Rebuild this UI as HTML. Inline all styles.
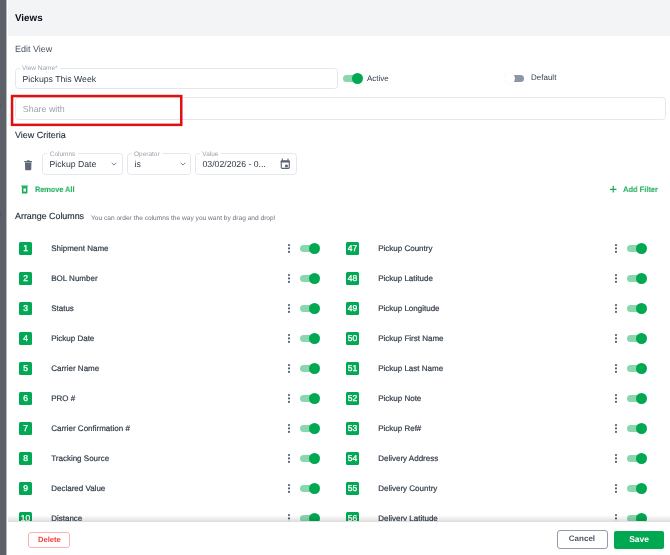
<!DOCTYPE html>
<html><head><meta charset="utf-8">
<style>
*{box-sizing:border-box;margin:0;padding:0}
body>*{will-change:transform}
html,body{text-rendering:geometricPrecision;width:670px;height:555px;overflow:hidden;background:#fff;font-family:"Liberation Sans",sans-serif;position:relative}
.a{position:absolute;white-space:nowrap}
.strip{left:0;top:0;width:7px;height:555px;background:linear-gradient(to right,#5c6068 6px,rgba(92,96,104,.45) 6px)}
.hdr{left:8px;top:0;width:662px;height:36px;background:#f3f4f6}
.t{position:absolute;white-space:nowrap;line-height:1}
.fld{position:absolute;border:1px solid #e4e7eb;border-radius:3.5px;background:#fff}
.lg{position:absolute;top:-3.3px;font-size:6.5px;color:#9ca3af;background:#fff;padding:0 2.4px;line-height:7px}
.tg{position:absolute;width:18px;height:11px}
.tg .tr{position:absolute;left:0;top:2px;width:17px;height:7.3px;border-radius:4px;background:#8ad7ad}
.tg .th{position:absolute;left:7.5px;top:0;width:11px;height:11px;border-radius:50%;background:#00a852}
.badge{position:absolute;width:13px;height:12.5px;background:#02a853;border-radius:1.5px;color:#fff;font-size:8.5px;font-weight:400;-webkit-text-stroke:.3px #fff;text-align:center;line-height:13px}
.lbl{position:absolute;font-size:8px;color:#2f3a48;white-space:nowrap;line-height:1;-webkit-text-stroke:.2px #2f3a48}
.dots{position:absolute;width:2px;height:9px}
.dots i{position:absolute;left:0;width:1.9px;height:1.9px;background:#525b69;border-radius:50%}
</style></head><body>
<div class="a strip" style="overflow:hidden"><div class="t" style="left:-4px;top:100px;font-size:9px;color:#3e434b;opacity:.5">p</div><div class="t" style="left:-4px;top:209px;font-size:9px;color:#3e434b;opacity:.5">g</div></div>
<div class="a hdr"></div>
<div class="t" style="left:15.4px;top:14px;font-size:9.8px;font-weight:700;color:#0b0f19">Views</div>
<div class="t" style="left:15.4px;top:44.8px;font-size:9px;color:#4b5563">Edit View</div>

<!-- View name -->
<div class="fld" style="left:15px;top:67.6px;width:322.5px;height:21px">
  <div class="lg" style="left:3.6px;top:-3.9px;font-size:6.5px">View Name*</div>
  <div class="t" style="left:6.5px;top:5.6px;font-size:8.7px;color:#2f3846">Pickups This Week</div>
</div>

<!-- Active toggle -->
<div class="tg" style="left:342.8px;top:72.8px"><div class="tr"></div><div class="th" style="left:8.6px"></div></div>
<div class="t" style="left:367px;top:74.5px;font-size:8px;color:#374151">Active</div>

<!-- Default toggle -->
<div class="tg" style="left:504px;top:72.5px"><div class="tr" style="left:5px;width:15px;background:#8c97a5"></div><div class="th" style="left:0;background:#fff;box-shadow:0 0 1px rgba(0,0,0,.12)"></div></div>
<div class="t" style="left:530.6px;top:74.2px;font-size:8px;color:#374151">Default</div>

<!-- Share with -->
<div class="fld" style="left:15px;top:97.2px;width:650.6px;height:22.6px">
  <div class="t" style="left:6.8px;top:6.5px;font-size:8.9px;color:#9ca3af">Share with</div>
</div>
<svg class="a" style="left:0;top:0" width="200" height="140" viewBox="0 0 200 140"><rect x="12.05" y="96.05" width="169.2" height="28.8" fill="none" stroke="#e20f10" stroke-width="2.5"/></svg>

<div class="t" style="left:15.4px;top:130.6px;font-size:9px;color:#1f2937;-webkit-text-stroke:.1px #1f2937">View Criteria</div>

<!-- Criteria -->
<svg class="a" style="left:24px;top:159.5px" width="8.5" height="10.5" viewBox="0 0 8.5 10.5"><rect x="2.9" y="0.2" width="2.8" height="1.4" rx=".5" fill="#5e6878"/><rect x="0.2" y="1.1" width="7.9" height="1.2" rx=".5" fill="#5e6878"/><path d="M1 2.4h6.4l-.15 7.2c0 .4-.35.7-.75.7H1.9c-.4 0-.75-.3-.75-.7z" fill="#5e6878"/></svg>

<div class="fld" style="left:41.6px;top:153px;width:80.6px;height:21.6px">
  <div class="lg" style="left:4.3px">Columns</div>
  <div class="t" style="left:6.5px;top:6px;font-size:8.7px;color:#2f3846">Pickup Date</div>
  <svg class="a" style="left:68px;top:8px" width="6" height="4" viewBox="0 0 6 4"><path d="M.7.8L3 3.1 5.3.8" fill="none" stroke="#6b7280" stroke-width=".9"/></svg>
</div>
<div class="fld" style="left:127.3px;top:153px;width:63.5px;height:21.6px">
  <div class="lg" style="left:3.6px">Operator</div>
  <div class="t" style="left:6.5px;top:6px;font-size:8.7px;color:#2f3846">is</div>
  <svg class="a" style="left:51.5px;top:8px" width="6" height="4" viewBox="0 0 6 4"><path d="M.7.8L3 3.1 5.3.8" fill="none" stroke="#6b7280" stroke-width=".9"/></svg>
</div>
<div class="fld" style="left:195.2px;top:153px;width:101.5px;height:21.6px">
  <div class="lg" style="left:3.9px">Value</div>
  <div class="t" style="left:6.5px;top:6px;font-size:8.7px;color:#2f3846">03/02/2026 - 0...</div>
  <svg class="a" style="left:84px;top:4px" width="11" height="12" viewBox="0 0 11 12"><path d="M2.3 0.5v2.4M8 0.5v2.4" stroke="#56606e" stroke-width="1"/><rect x="1.25" y="3.1" width="8" height="7.3" rx=".9" fill="none" stroke="#56606e" stroke-width="1.1"/><rect x="0.7" y="2.6" width="9.1" height="1.9" rx=".5" fill="#56606e"/><rect x="5.1" y="6.7" width="2.7" height="2.5" rx=".3" fill="#56606e"/></svg>
</div>

<svg class="a" style="left:21px;top:184.6px" width="7.5" height="9" viewBox="0 0 7.5 9"><rect x="0" y="0.4" width="7.2" height="1.1" rx=".5" fill="#17ab56"/><rect x="0.9" y="1.3" width="5.5" height="7.2" rx=".7" fill="#17ab56"/><path d="M2.5 3.2h2.3v3.6H2.5z" fill="#fff"/><path d="M3.15 3.2h1l-.5.9zM3.15 6.8h1l-.5-.9z" fill="#17ab56"/></svg>
<div class="t" style="left:34.7px;top:185.7px;font-size:7.9px;font-weight:700;color:#17ab56;transform:scaleX(.925);transform-origin:0 0">Remove All</div>

<svg class="a" style="left:609.7px;top:186px" width="6.5" height="6.5" viewBox="0 0 6.5 6.5"><path d="M3.25 0v6.5M0 3.25h6.5" stroke="#1aab55" stroke-width="1.25"/></svg>
<div class="t" style="left:623.2px;top:185.6px;font-size:7.9px;font-weight:700;color:#17ab56;transform:scaleX(.95);transform-origin:0 0">Add Filter</div>

<div class="t" style="left:15.2px;top:212px;font-size:8.9px;color:#1f2937;-webkit-text-stroke:.15px #1f2937">Arrange Columns</div>
<div class="t" style="left:91px;top:215.6px;font-size:6.6px;color:#6b7280">You can order the columns the way you want by drag and drop!</div>
<div class="a" style="left:8px;top:0;width:662px;height:521px;overflow:hidden">
<div class="badge" style="left:11.00px;top:242.20px">1</div><div class="lbl" style="left:43.20px;top:244.80px">Shipment Name</div><svg class="a" style="left:278.50px;top:241.40px" width="4" height="14" viewBox="0 0 4 14"><circle cx="2" cy="4.1" r="1.05" fill="#526070"/><circle cx="2" cy="7.4" r="1.05" fill="#526070"/><circle cx="2" cy="10.9" r="1.05" fill="#526070"/></svg><div class="tg" style="left:292.00px;top:242.90px"><div class="tr"></div><div class="th" style="left:9.3px"></div></div>
<div class="badge" style="left:338.00px;top:242.20px">47</div><div class="lbl" style="left:370.20px;top:244.80px">Pickup Country</div><svg class="a" style="left:605.50px;top:241.40px" width="4" height="14" viewBox="0 0 4 14"><circle cx="2" cy="4.1" r="1.05" fill="#526070"/><circle cx="2" cy="7.4" r="1.05" fill="#526070"/><circle cx="2" cy="10.9" r="1.05" fill="#526070"/></svg><div class="tg" style="left:619.00px;top:242.90px"><div class="tr"></div><div class="th" style="left:9.3px"></div></div>
<div class="badge" style="left:11.00px;top:272.20px">2</div><div class="lbl" style="left:43.20px;top:274.80px">BOL Number</div><svg class="a" style="left:278.50px;top:271.40px" width="4" height="14" viewBox="0 0 4 14"><circle cx="2" cy="4.1" r="1.05" fill="#526070"/><circle cx="2" cy="7.4" r="1.05" fill="#526070"/><circle cx="2" cy="10.9" r="1.05" fill="#526070"/></svg><div class="tg" style="left:292.00px;top:272.90px"><div class="tr"></div><div class="th" style="left:9.3px"></div></div>
<div class="badge" style="left:338.00px;top:272.20px">48</div><div class="lbl" style="left:370.20px;top:274.80px">Pickup Latitude</div><svg class="a" style="left:605.50px;top:271.40px" width="4" height="14" viewBox="0 0 4 14"><circle cx="2" cy="4.1" r="1.05" fill="#526070"/><circle cx="2" cy="7.4" r="1.05" fill="#526070"/><circle cx="2" cy="10.9" r="1.05" fill="#526070"/></svg><div class="tg" style="left:619.00px;top:272.90px"><div class="tr"></div><div class="th" style="left:9.3px"></div></div>
<div class="badge" style="left:11.00px;top:302.20px">3</div><div class="lbl" style="left:43.20px;top:304.80px">Status</div><svg class="a" style="left:278.50px;top:301.40px" width="4" height="14" viewBox="0 0 4 14"><circle cx="2" cy="4.1" r="1.05" fill="#526070"/><circle cx="2" cy="7.4" r="1.05" fill="#526070"/><circle cx="2" cy="10.9" r="1.05" fill="#526070"/></svg><div class="tg" style="left:292.00px;top:302.90px"><div class="tr"></div><div class="th" style="left:9.3px"></div></div>
<div class="badge" style="left:338.00px;top:302.20px">49</div><div class="lbl" style="left:370.20px;top:304.80px">Pickup Longitude</div><svg class="a" style="left:605.50px;top:301.40px" width="4" height="14" viewBox="0 0 4 14"><circle cx="2" cy="4.1" r="1.05" fill="#526070"/><circle cx="2" cy="7.4" r="1.05" fill="#526070"/><circle cx="2" cy="10.9" r="1.05" fill="#526070"/></svg><div class="tg" style="left:619.00px;top:302.90px"><div class="tr"></div><div class="th" style="left:9.3px"></div></div>
<div class="badge" style="left:11.00px;top:332.20px">4</div><div class="lbl" style="left:43.20px;top:334.80px">Pickup Date</div><svg class="a" style="left:278.50px;top:331.40px" width="4" height="14" viewBox="0 0 4 14"><circle cx="2" cy="4.1" r="1.05" fill="#526070"/><circle cx="2" cy="7.4" r="1.05" fill="#526070"/><circle cx="2" cy="10.9" r="1.05" fill="#526070"/></svg><div class="tg" style="left:292.00px;top:332.90px"><div class="tr"></div><div class="th" style="left:9.3px"></div></div>
<div class="badge" style="left:338.00px;top:332.20px">50</div><div class="lbl" style="left:370.20px;top:334.80px">Pickup First Name</div><svg class="a" style="left:605.50px;top:331.40px" width="4" height="14" viewBox="0 0 4 14"><circle cx="2" cy="4.1" r="1.05" fill="#526070"/><circle cx="2" cy="7.4" r="1.05" fill="#526070"/><circle cx="2" cy="10.9" r="1.05" fill="#526070"/></svg><div class="tg" style="left:619.00px;top:332.90px"><div class="tr"></div><div class="th" style="left:9.3px"></div></div>
<div class="badge" style="left:11.00px;top:362.20px">5</div><div class="lbl" style="left:43.20px;top:364.80px">Carrier Name</div><svg class="a" style="left:278.50px;top:361.40px" width="4" height="14" viewBox="0 0 4 14"><circle cx="2" cy="4.1" r="1.05" fill="#526070"/><circle cx="2" cy="7.4" r="1.05" fill="#526070"/><circle cx="2" cy="10.9" r="1.05" fill="#526070"/></svg><div class="tg" style="left:292.00px;top:362.90px"><div class="tr"></div><div class="th" style="left:9.3px"></div></div>
<div class="badge" style="left:338.00px;top:362.20px">51</div><div class="lbl" style="left:370.20px;top:364.80px">Pickup Last Name</div><svg class="a" style="left:605.50px;top:361.40px" width="4" height="14" viewBox="0 0 4 14"><circle cx="2" cy="4.1" r="1.05" fill="#526070"/><circle cx="2" cy="7.4" r="1.05" fill="#526070"/><circle cx="2" cy="10.9" r="1.05" fill="#526070"/></svg><div class="tg" style="left:619.00px;top:362.90px"><div class="tr"></div><div class="th" style="left:9.3px"></div></div>
<div class="badge" style="left:11.00px;top:392.20px">6</div><div class="lbl" style="left:43.20px;top:394.80px">PRO #</div><svg class="a" style="left:278.50px;top:391.40px" width="4" height="14" viewBox="0 0 4 14"><circle cx="2" cy="4.1" r="1.05" fill="#526070"/><circle cx="2" cy="7.4" r="1.05" fill="#526070"/><circle cx="2" cy="10.9" r="1.05" fill="#526070"/></svg><div class="tg" style="left:292.00px;top:392.90px"><div class="tr"></div><div class="th" style="left:9.3px"></div></div>
<div class="badge" style="left:338.00px;top:392.20px">52</div><div class="lbl" style="left:370.20px;top:394.80px">Pickup Note</div><svg class="a" style="left:605.50px;top:391.40px" width="4" height="14" viewBox="0 0 4 14"><circle cx="2" cy="4.1" r="1.05" fill="#526070"/><circle cx="2" cy="7.4" r="1.05" fill="#526070"/><circle cx="2" cy="10.9" r="1.05" fill="#526070"/></svg><div class="tg" style="left:619.00px;top:392.90px"><div class="tr"></div><div class="th" style="left:9.3px"></div></div>
<div class="badge" style="left:11.00px;top:422.20px">7</div><div class="lbl" style="left:43.20px;top:424.80px">Carrier Confirmation #</div><svg class="a" style="left:278.50px;top:421.40px" width="4" height="14" viewBox="0 0 4 14"><circle cx="2" cy="4.1" r="1.05" fill="#526070"/><circle cx="2" cy="7.4" r="1.05" fill="#526070"/><circle cx="2" cy="10.9" r="1.05" fill="#526070"/></svg><div class="tg" style="left:292.00px;top:422.90px"><div class="tr"></div><div class="th" style="left:9.3px"></div></div>
<div class="badge" style="left:338.00px;top:422.20px">53</div><div class="lbl" style="left:370.20px;top:424.80px">Pickup Ref#</div><svg class="a" style="left:605.50px;top:421.40px" width="4" height="14" viewBox="0 0 4 14"><circle cx="2" cy="4.1" r="1.05" fill="#526070"/><circle cx="2" cy="7.4" r="1.05" fill="#526070"/><circle cx="2" cy="10.9" r="1.05" fill="#526070"/></svg><div class="tg" style="left:619.00px;top:422.90px"><div class="tr"></div><div class="th" style="left:9.3px"></div></div>
<div class="badge" style="left:11.00px;top:452.20px">8</div><div class="lbl" style="left:43.20px;top:454.80px">Tracking Source</div><svg class="a" style="left:278.50px;top:451.40px" width="4" height="14" viewBox="0 0 4 14"><circle cx="2" cy="4.1" r="1.05" fill="#526070"/><circle cx="2" cy="7.4" r="1.05" fill="#526070"/><circle cx="2" cy="10.9" r="1.05" fill="#526070"/></svg><div class="tg" style="left:292.00px;top:452.90px"><div class="tr"></div><div class="th" style="left:9.3px"></div></div>
<div class="badge" style="left:338.00px;top:452.20px">54</div><div class="lbl" style="left:370.20px;top:454.80px">Delivery Address</div><svg class="a" style="left:605.50px;top:451.40px" width="4" height="14" viewBox="0 0 4 14"><circle cx="2" cy="4.1" r="1.05" fill="#526070"/><circle cx="2" cy="7.4" r="1.05" fill="#526070"/><circle cx="2" cy="10.9" r="1.05" fill="#526070"/></svg><div class="tg" style="left:619.00px;top:452.90px"><div class="tr"></div><div class="th" style="left:9.3px"></div></div>
<div class="badge" style="left:11.00px;top:482.20px">9</div><div class="lbl" style="left:43.20px;top:484.80px">Declared Value</div><svg class="a" style="left:278.50px;top:481.40px" width="4" height="14" viewBox="0 0 4 14"><circle cx="2" cy="4.1" r="1.05" fill="#526070"/><circle cx="2" cy="7.4" r="1.05" fill="#526070"/><circle cx="2" cy="10.9" r="1.05" fill="#526070"/></svg><div class="tg" style="left:292.00px;top:482.90px"><div class="tr"></div><div class="th" style="left:9.3px"></div></div>
<div class="badge" style="left:338.00px;top:482.20px">55</div><div class="lbl" style="left:370.20px;top:484.80px">Delivery Country</div><svg class="a" style="left:605.50px;top:481.40px" width="4" height="14" viewBox="0 0 4 14"><circle cx="2" cy="4.1" r="1.05" fill="#526070"/><circle cx="2" cy="7.4" r="1.05" fill="#526070"/><circle cx="2" cy="10.9" r="1.05" fill="#526070"/></svg><div class="tg" style="left:619.00px;top:482.90px"><div class="tr"></div><div class="th" style="left:9.3px"></div></div>
<div class="badge" style="left:11.00px;top:512.20px">10</div><div class="lbl" style="left:43.20px;top:514.80px">Distance</div><svg class="a" style="left:278.50px;top:511.40px" width="4" height="14" viewBox="0 0 4 14"><circle cx="2" cy="4.1" r="1.05" fill="#526070"/><circle cx="2" cy="7.4" r="1.05" fill="#526070"/><circle cx="2" cy="10.9" r="1.05" fill="#526070"/></svg><div class="tg" style="left:292.00px;top:512.90px"><div class="tr"></div><div class="th" style="left:9.3px"></div></div>
<div class="badge" style="left:338.00px;top:512.20px">56</div><div class="lbl" style="left:370.20px;top:514.80px">Delivery Latitude</div><svg class="a" style="left:605.50px;top:511.40px" width="4" height="14" viewBox="0 0 4 14"><circle cx="2" cy="4.1" r="1.05" fill="#526070"/><circle cx="2" cy="7.4" r="1.05" fill="#526070"/><circle cx="2" cy="10.9" r="1.05" fill="#526070"/></svg><div class="tg" style="left:619.00px;top:512.90px"><div class="tr"></div><div class="th" style="left:9.3px"></div></div>
</div>
<div class="a" style="left:8px;top:515px;width:662px;height:6.5px;background:linear-gradient(to bottom,rgba(0,0,0,0),rgba(0,0,0,.05) 40%,rgba(0,0,0,.135))"></div>
<div class="a" style="left:8px;top:521.5px;width:662px;height:34px;background:#fff"></div>
<div class="a" style="left:27.6px;top:531.8px;width:42.2px;height:15.9px;border:1px solid #fcb0b0;border-radius:3px;color:#f63e3e;font-size:7.6px;font-weight:700;text-align:center;line-height:13.9px;padding-left:.6px">Delete</div>
<div class="a" style="left:557.2px;top:530.3px;width:50.5px;height:18.8px;border:1px solid #939ca8;border-radius:3px;color:#4b5563;font-size:8px;font-weight:700;text-align:center;line-height:16.8px;padding-right:.6px">Cancel</div>
<div class="a" style="left:614px;top:530.5px;width:50.2px;height:17.8px;background:#00a852;border-radius:2px;color:#fff;font-size:8.5px;font-weight:700;text-align:center;line-height:17.8px">Save</div>
</body></html>
